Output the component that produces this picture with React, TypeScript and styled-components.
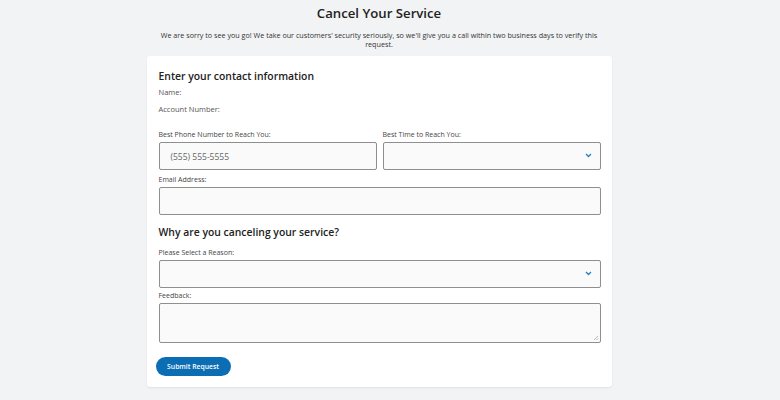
import styled, { createGlobalStyle } from "styled-components";

const GlobalStyle = createGlobalStyle`
  html, body {
    margin: 0;
    padding: 0;
    background: #f2f3f5;
    font-family: "Open Sans", "Liberation Sans", sans-serif;
    color: #333;
  }
`;

const Page = styled.div`
  width: 758px;
  min-height: 400px;
  display: flex;
  flex-direction: column;
  align-items: center;
  padding-top: 3px;
  box-sizing: border-box;
`;

const Title = styled.h1`
  margin: 0;
  font-size: 13.2px;
  font-weight: 600;
  line-height: 20px;
  color: #222;
`;

const Intro = styled.p`
  margin: 8px 0 0;
  width: 460px;
  text-align: center;
  font-size: 7.2px;
  line-height: 9px;
  color: #333;
`;

const Card = styled.div`
  margin-top: 7px;
  width: 465px;
  background: #fff;
  border-radius: 3px;
  box-shadow: 0 1px 2px rgba(0, 0, 0, 0.08);
  padding: 13px 11px 11px 12px;
  box-sizing: border-box;
`;

const SectionTitle = styled.h2<{ $top?: number }>`
  margin: ${(p) => p.$top ?? 0}px 0 0;
  font-size: 10.4px;
  font-weight: 600;
  line-height: 14px;
  color: #222;
`;

const Info = styled.div<{ $top: number }>`
  font-size: 7.5px;
  line-height: 10px;
  color: #555;
  margin-top: ${(p) => p.$top}px;
`;

const Row = styled.div`
  display: grid;
  grid-template-columns: 1fr 1fr;
  gap: 6px;
  margin-top: 16px;
`;

const Field = styled.div<{ $top?: number }>`
  display: flex;
  flex-direction: column;
  margin-top: ${(p) => p.$top ?? 0}px;
`;

const Label = styled.label`
  font-size: 7px;
  line-height: 10px;
  color: #444;
  margin-bottom: 2px;
`;

const Box = styled.div<{ $h?: number }>`
  position: relative;
  height: ${(p) => p.$h ?? 28}px;
  box-sizing: border-box;
  background: #fafafa;
  border: 1px solid #8f8f8f;
  border-radius: 2px;
  display: flex;
  align-items: center;
  padding: 0 11px;
  font-size: 8.5px;
  color: #666;
`;

const Chevron = styled.svg`
  position: absolute;
  right: 8px;
  top: 50%;
  margin-top: -3px;
`;

const Grip = styled.svg`
  position: absolute;
  right: 1px;
  bottom: 1px;
`;

const Button = styled.button`
  margin: 14px 0 0 -3px;
  height: 19px;
  width: 75px;
  border: none;
  border-radius: 10px;
  background: #0b6db3;
  color: #fff;
  font-family: inherit;
  font-size: 6.8px;
  font-weight: 600;
  padding: 0;
`;

const SelectBox = ({ h }: { h?: number }) => (
  <Box $h={h}>
    <Chevron width="7" height="5" viewBox="0 0 7 5">
      <path d="M1 1l2.5 2.5L6 1" fill="none" stroke="#2a7ec0" strokeWidth="1.3" />
    </Chevron>
  </Box>
);

export default function App() {
  return (
    <>
      <GlobalStyle />
      <Page>
        <Title>Cancel Your Service</Title>
        <Intro>
          We are sorry to see you go! We take our customers' security seriously, so we'll give you a call
          within two business days to verify this request.
        </Intro>
        <Card>
          <SectionTitle>Enter your contact information</SectionTitle>
          <Info $top={4}>Name:</Info>
          <Info $top={7}>Account Number:</Info>
          <Row>
            <Field>
              <Label>Best Phone Number to Reach You:</Label>
              <Box>(555) 555-5555</Box>
            </Field>
            <Field>
              <Label>Best Time to Reach You:</Label>
              <SelectBox />
            </Field>
          </Row>
          <Field $top={5}>
            <Label>Email Address:</Label>
            <Box />
          </Field>
          <SectionTitle $top={10}>Why are you canceling your service?</SectionTitle>
          <Field $top={9}>
            <Label>Please Select a Reason:</Label>
            <SelectBox />
          </Field>
          <Field $top={3}>
            <Label>Feedback:</Label>
            <Box $h={40}>
              <Grip width="6" height="6" viewBox="0 0 6 6">
                <path d="M5 1L1 5M5 3.5L3.5 5" stroke="#999" strokeWidth="0.7" />
              </Grip>
            </Box>
          </Field>
          <Button>Submit Request</Button>
        </Card>
      </Page>
    </>
  );
}
